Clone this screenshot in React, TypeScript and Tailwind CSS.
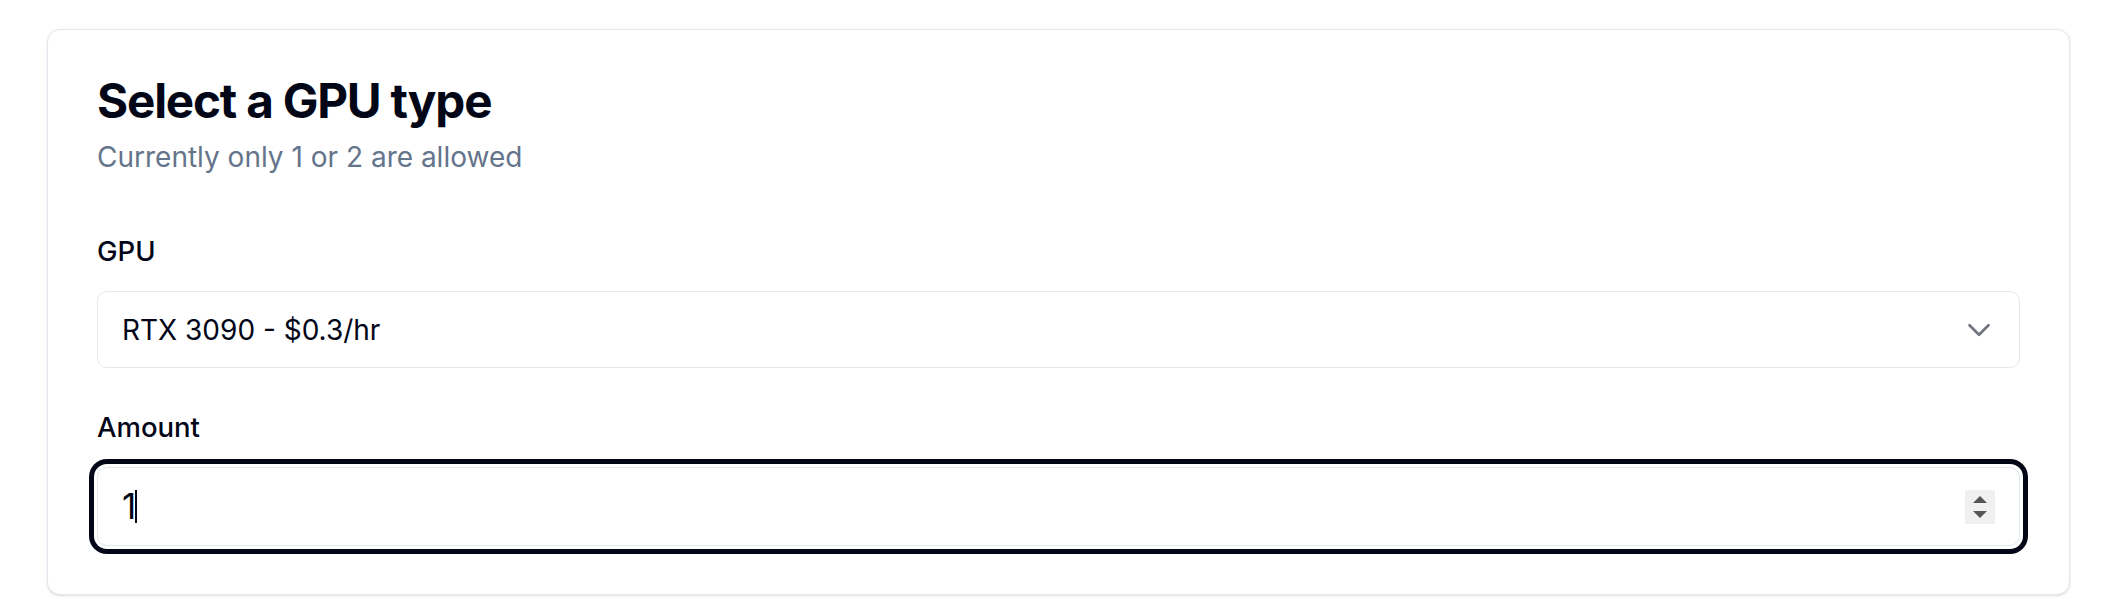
import { ChevronDown } from "lucide-react"

export default function App() {
  return (
    <div className="min-h-screen bg-white pl-[47px] pt-[29px] font-['Inter',sans-serif] text-[#020617]">
      <div className="w-[2023px] rounded-[13px] border border-[#e2e8f0] bg-white px-[49px] pt-[47px] pb-[48px] shadow-sm">
        <h3 className="text-[47.6px] font-bold leading-[47px] tracking-tight">Select a GPU type</h3>
        <p className="mt-[14px] text-[28px] leading-[38px] text-[#64748b]">Currently only 1 or 2 are allowed</p>

        <label className="mt-[61px] block text-[27.5px] font-medium leading-[28px]">GPU</label>
        <div className="mt-[26px] flex h-[77px] items-center justify-between rounded-[10px] border border-[#e2e8f0] bg-white pl-[24px] pr-[21px] text-[28px]">
          <span>RTX 3090 - $0.3/hr</span>
          <ChevronDown size={38} strokeWidth={1.7} className="text-[#71757e]" />
        </div>

        <label className="mt-[45px] block text-[27.5px] font-medium leading-[28px]">Amount</label>
        <div className="mt-[26px] flex h-[79px] items-center justify-between rounded-[10px] border border-[#e2e8f0] bg-white pl-[24px] pr-[24px] ring-5 ring-[#020617] ring-offset-3 ring-offset-white">
          <div className="flex items-center text-[35px] leading-none">
            <span>1</span>
            <span className="ml-[-1px] inline-block h-[33px] w-[2px] bg-[#020617]" />
          </div>
          <div className="flex h-[34px] w-[30px] flex-col items-center justify-center gap-[8px] bg-[#f0f0f0]">
            <svg width="14" height="7" viewBox="0 0 14 7">
              <path d="M7 0 L14 7 L0 7 Z" fill="#555" />
            </svg>
            <svg width="14" height="7" viewBox="0 0 14 7">
              <path d="M0 0 L14 0 L7 7 Z" fill="#555" />
            </svg>
          </div>
        </div>
      </div>
    </div>
  )
}
